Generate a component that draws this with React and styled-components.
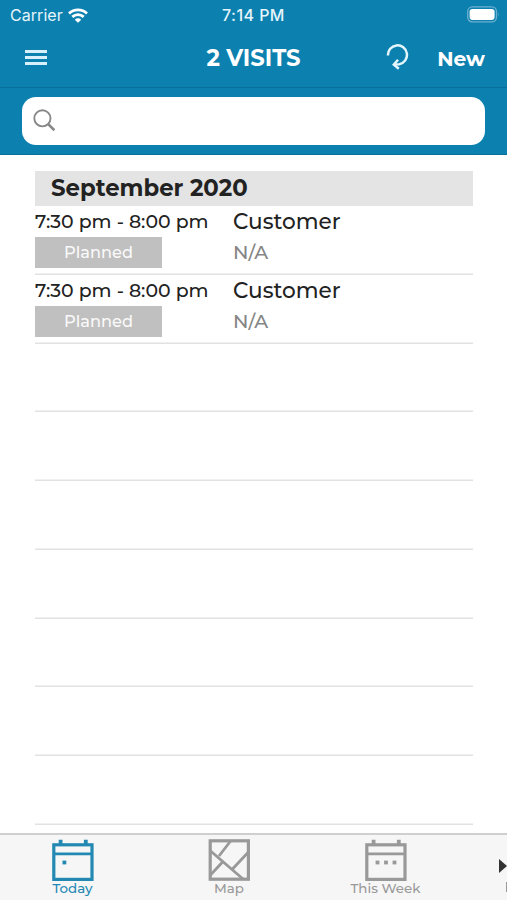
import React from "react";
import styled, { createGlobalStyle } from "styled-components";

const visits = [
  { id: 1, time: "7:30 pm - 8:00 pm", status: "Planned", name: "Customer", place: "N/A" },
  { id: 2, time: "7:30 pm - 8:00 pm", status: "Planned", name: "Customer", place: "N/A" },
];

const emptyRows = [1, 2, 3, 4, 5, 6, 7];

const WifiIcon = () => (
  <svg width="20" height="15" viewBox="0 0 20 15" fill="none" stroke="#fff" strokeWidth="2.8">
    <path d="M1 5.4C6 0.7 14 0.7 19 5.4" />
    <path d="M4.3 8.9C7.6 5.9 12.4 5.9 15.7 8.9" />
    <path d="M10 14.8L6.8 11.7C8.6 9.9 11.4 9.9 13.2 11.7Z" fill="#fff" stroke="none" />
  </svg>
);

const BatteryIcon = () => (
  <svg width="33" height="17" viewBox="0 0 33 17">
    <rect x="0.7" y="0.9" width="28.8" height="15" rx="4.6" fill="none" stroke="#6db0d0" strokeWidth="1.3" />
    <rect x="2.6" y="2.9" width="25" height="11" rx="2.8" fill="#fff" />
    <path d="M31 6.2Q32.6 8.4 31 10.6Z" fill="#6db0d0" />
  </svg>
);

const RefreshIcon = () => (
  <svg width="24" height="26" viewBox="0 0 24 26" fill="none" stroke="#e4f5fc" strokeWidth="2.5">
    <path d="M2 11.5A9.5 9.5 0 1 1 13.3 20.2L8.6 20.6" />
    <path d="M12 15.8L7.8 20.6L12.8 24.8" />
  </svg>
);

const SearchIcon = () => (
  <svg width="24" height="24" viewBox="0 0 24 24" fill="none" stroke="#888" strokeWidth="1.9">
    <circle cx="9.4" cy="9.3" r="8.1" />
    <path d="M15.2 15.1L21.4 21.2" strokeWidth="2.6" />
  </svg>
);

const CalendarIcon = ({ dots }) => (
  <svg width="42" height="42" viewBox="0 0 42 42" fill="none" stroke="currentColor">
    <rect x="1.8" y="5.8" width="38.2" height="34.6" strokeWidth="3.2" />
    <path d="M1 14.8H41" strokeWidth="2.8" />
    <path d="M8.6 0.8V5M33.8 0.8V5" strokeWidth="3.8" />
    {dots.map((x) => (
      <rect key={x} x={x} y="21.6" width="3.8" height="3.8" fill="currentColor" stroke="none" />
    ))}
  </svg>
);

const MapIcon = () => (
  <svg width="42" height="42" viewBox="0 0 42 42" fill="none" stroke="currentColor" strokeWidth="2.8">
    <rect x="2.2" y="1.8" width="38.2" height="38.4" strokeWidth="3.2" />
    <path d="M2 11.5L35 40M23 1.5L11 17M40 13.5L24.5 30M15.5 22L2 36.5" />
  </svg>
);

export default function App() {
  return (
    <Screen>
      <GlobalStyle />
      <StatusBar>
        <Carrier>
          <CarrierName>Carrier</CarrierName>
          <WifiIcon />
        </Carrier>
        <Clock>7:14 PM</Clock>
        <Battery>
          <BatteryIcon />
        </Battery>
      </StatusBar>

      <Navbar>
        <MenuButton aria-label="Menu">
          <span />
          <span />
          <span />
        </MenuButton>
        <Title>2 VISITS</Title>
        <Actions>
          <RefreshButton aria-label="Refresh">
            <RefreshIcon />
          </RefreshButton>
          <NewButton>New</NewButton>
        </Actions>
      </Navbar>

      <SearchBar>
        <SearchField>
          <SearchIcon />
          <input type="text" aria-label="Search" />
        </SearchField>
      </SearchBar>

      <List>
        <Month>September 2020</Month>
        {visits.map((visit) => (
          <Row key={visit.id}>
            <Time>{visit.time}</Time>
            <Name>{visit.name}</Name>
            <Status>{visit.status}</Status>
            <Place>{visit.place}</Place>
          </Row>
        ))}
        {emptyRows.map((n) => (
          <Row key={n} />
        ))}
      </List>

      <TabBar>
        <Tab $active>
          <CalendarIcon dots={[10.5]} />
          <TabLabel>Today</TabLabel>
        </Tab>
        <Tab>
          <MapIcon />
          <TabLabel>Map</TabLabel>
        </Tab>
        <Tab>
          <CalendarIcon dots={[10.6, 19.1, 27.6]} />
          <TabLabel>This Week</TabLabel>
        </Tab>
        <More>
          <Arrow />
          <NextLabel />
        </More>
      </TabBar>
    </Screen>
  );
}

const GlobalStyle = createGlobalStyle`
  * {
    box-sizing: border-box;
  }
  body {
    margin: 0;
    background: #fff;
    overflow: hidden;
  }
  button {
    border: 0;
    padding: 0;
    background: none;
    color: inherit;
    font: inherit;
  }
  svg {
    display: block;
    flex: none;
  }
`;

const Screen = styled.div`
  display: flex;
  flex-direction: column;
  width: 507px;
  height: 900px;
  overflow: hidden;
  background: #fff;
  color: #222;
  font-family: "Montserrat", "Inter", "Liberation Sans", sans-serif;
  white-space: nowrap;
`;

const StatusBar = styled.header`
  display: grid;
  grid-template-columns: 1fr auto 1fr;
  align-items: center;
  flex: none;
  height: 30px;
  padding: 0 7px 0 10px;
  background: #0c81b0;
  color: #e6f5fb;
  font-family: "Inter", "Liberation Sans", sans-serif;
`;

const Carrier = styled.div`
  display: flex;
  align-items: center;
  gap: 5px;
`;

const CarrierName = styled.span`
  font-size: 16px;
  letter-spacing: 0.05px;
`;

const Clock = styled.span`
  margin-right: 3px;
  font-size: 16px;
  font-weight: 500;
  letter-spacing: 0.45px;
`;

const Battery = styled.div`
  display: flex;
  justify-content: flex-end;
  padding-bottom: 2px;
`;

const Navbar = styled.nav`
  display: grid;
  grid-template-columns: 1fr auto 1fr;
  align-items: center;
  flex: none;
  height: 58px;
  padding: 0 22px 3px 25px;
  border-bottom: 1px solid #096f9b;
  background: #0c81b0;
  color: #fff;
`;

const MenuButton = styled.button`
  display: flex;
  flex-direction: column;
  gap: 3px;
  width: 22px;

  span {
    height: 3px;
    background: #d8f0fa;
  }
`;

const Title = styled.h1`
  margin: 2px 3px 0 0;
  font-size: 22.7px;
  font-weight: 700;
`;

const Actions = styled.div`
  display: flex;
  justify-content: flex-end;
  align-items: center;
  gap: 27px;
`;

const RefreshButton = styled.button`
  padding-bottom: 1px;
`;

const NewButton = styled.button`
  && {
    padding-top: 3px;
    font-size: 20.2px;
    font-weight: 700;
  }
`;

const SearchBar = styled.div`
  flex: none;
  height: 67px;
  padding: 9px 22px 0;
  border-bottom: 1px solid #096f9b;
  background: #0c81b0;
`;

const SearchField = styled.label`
  display: flex;
  align-items: center;
  gap: 8px;
  height: 48px;
  padding: 0 11px;
  border-radius: 14px;
  background: #fff;

  input {
    flex: 1;
    border: 0;
    outline: 0;
    background: none;
    font-size: 18px;
  }
`;

const List = styled.main`
  flex: 1;
  min-height: 0;
  padding: 16px 34px 0 35px;
  overflow: hidden;
`;

const Month = styled.h2`
  height: 35px;
  margin: 0;
  padding-left: 16px;
  background: #e4e4e4;
  font-size: 22.8px;
  font-weight: 700;
  line-height: 35px;
`;

const Row = styled.div`
  display: grid;
  grid-template-columns: 198px 1fr;
  grid-template-rows: 31px 31px;
  align-items: center;
  height: 68.75px;
  box-shadow: inset 0 -1.5px 0 #e2e2e2;
`;

const Time = styled.span`
  font-size: 18.9px;
  font-weight: 500;
`;

const Name = styled.span`
  margin-bottom: 1px;
  font-size: 21.6px;
  font-weight: 500;
`;

const Status = styled.span`
  width: 127px;
  height: 31px;
  background: #c0c0c0;
  color: #fafafa;
  font-size: 16.2px;
  font-weight: 500;
  line-height: 31px;
  text-align: center;
`;

const Place = styled.span`
  color: #858585;
  font-size: 19px;
  font-weight: 500;
`;

const TabBar = styled.footer`
  display: grid;
  grid-template-columns: 145px 168px 145px 1fr;
  flex: none;
  height: 67px;
  border-top: 2px solid #cfcfcf;
  background: #f6f6f6;
`;

const Tab = styled.button`
  && {
    display: flex;
    flex-direction: column;
    align-items: center;
    padding-top: 4px;
    color: ${(props) => (props.$active ? "#2389b3" : "#999")};
  }
`;

const TabLabel = styled.span`
  font-size: 13.4px;
  font-weight: 500;
  line-height: 14px;
`;

const More = styled.div`
  display: flex;
  flex-direction: column;
  align-items: flex-end;
  padding-top: 24px;
`;

const Arrow = styled.span`
  border-top: 7px solid transparent;
  border-bottom: 7px solid transparent;
  border-left: 8px solid #333;
`;

const NextLabel = styled.span`
  width: 1px;
  height: 10px;
  margin-top: 9px;
  background: #999;
`;
